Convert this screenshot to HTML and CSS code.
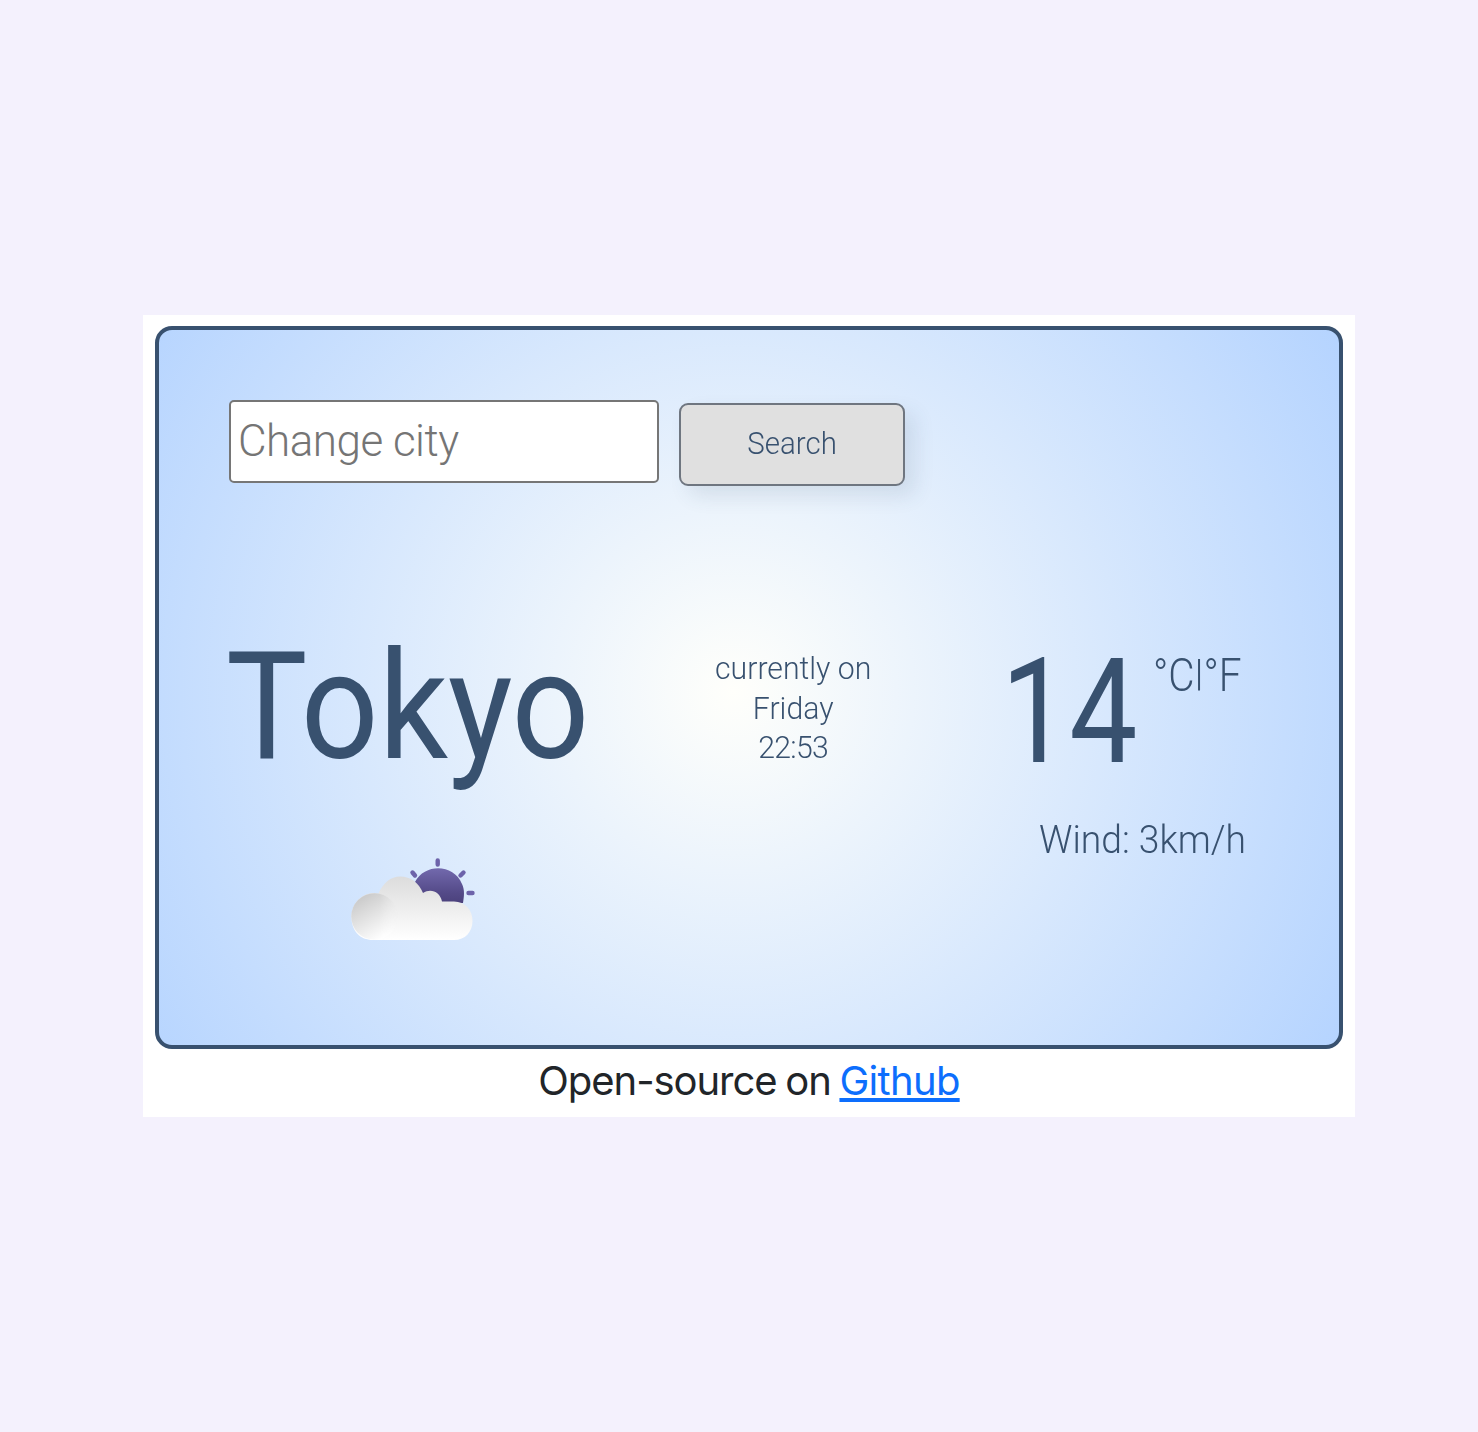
FILE: index.html
```html
<!DOCTYPE html>
<html lang="en">
<head>
<meta charset="utf-8">
<title>Weather</title>
<link rel="stylesheet" href="styles.css">
</head>
<body>
<main class="shell">
  <section class="card">
    <form class="search">
      <input class="city-input" type="text" placeholder="Change city">
      <button class="search-button" type="button"><span class="search-label">Search</span></button>
    </form>
    <div class="weather">
      <div class="place">
        <h1 class="city"><span class="city-name">Tokyo</span></h1>
        <svg class="icon" viewBox="0 0 130 90" width="130" height="90">
          <defs>
            <linearGradient id="sun" x1="0" y1="0" x2="0" y2="1"><stop offset="0" stop-color="#7269ad"/><stop offset=".7" stop-color="#544a88"/><stop offset="1" stop-color="#4b417c"/></linearGradient>
            <linearGradient id="cloud" x1="0" y1="0" x2="0" y2="1"><stop offset="0" stop-color="#dcdcdc"/><stop offset="1" stop-color="#fff"/></linearGradient>
            <linearGradient id="puff" x1=".2" y1=".1" x2=".7" y2=".95"><stop offset="0" stop-color="#cbcbcb"/><stop offset="1" stop-color="#fff"/></linearGradient>
            <linearGradient id="fade" x1="0" y1="0" x2="1" y2="0"><stop offset=".6" stop-color="#fff"/><stop offset="1" stop-color="#fff" stop-opacity="0"/></linearGradient>
            <mask id="puff-mask"><rect x="5" y="35" width="48" height="50" fill="url(#fade)"/></mask>
          </defs>
          <g stroke="#6d63aa" stroke-width="4.4" stroke-linecap="round">
            <path d="M91.700 5.500v4M66.500 17.500l2.500 3M117.500 17.500l-3 3M122.500 38h4"/>
          </g>
          <path d="M69 27C79 8 108 9 116 29C119 35 118 42 117 48H78Z" fill="url(#sun)"/>
          <path d="M27 85C14 85 5.500 76 5.500 62C5.500 48 16 38 28 38L32.500 38.500C37 28 45 21.500 54 21.500C65 21.500 73 28 77 38C85 33 94 37 96 46.500H108C119 46.500 126.500 55 126.500 66C126.500 77 119 85 108 85Z" fill="url(#cloud)"/>
          <circle cx="28.500" cy="61.500" r="23.200" fill="url(#puff)" mask="url(#puff-mask)"/>
        </svg>
      </div>
      <p class="when"><span class="when-text">currently on<br>Friday<br><span class="time">22:53</span></span></p>
      <div class="reading">
        <div class="temp"><span class="degrees">14</span><span class="units">°C<span class="bar">|</span>°F</span></div>
        <p class="wind"><span class="wind-text">Wind: 3km/h</span></p>
      </div>
    </div>
  </section>
  <footer class="credit">Open-source on <a class="credit-link" href="#">Github</a></footer>
</main>
</body>
</html>
```
FILE: styles.css
```css
* { box-sizing: border-box; }
body {
  margin: 0;
  min-height: 1432px;
  padding: 315px 123px 315px 143px;
  background: #f4f1fd;
  color: #38516f;
  font-family: Roboto, "Liberation Sans", sans-serif;
}
.shell { height: 802px; padding: 11px 12px 0; background: #fff; }
.card {
  height: 723px;
  padding: 70px;
  border: 4px solid #38516f;
  border-radius: 17px;
  background: radial-gradient(circle at 48.7% 50.5%, #fffffb, #b2d2ff 104%);
}
.search { display: flex; gap: 20px; height: 86px; }
.city-input {
  width: 430px;
  height: 83px;
  padding: 0 7px 1px;
  border: 2px solid #767676;
  border-radius: 5px;
  background: #fff;
  font: 350 44px Roboto, sans-serif;
  letter-spacing: -.5px;
}
.city-input::placeholder { color: #757575; opacity: 1; }
.search-button {
  width: 226px;
  height: 83px;
  margin-top: 3px;
  padding-bottom: 3px;
  border: 2px solid #6f7680;
  border-radius: 9px;
  background: #e0e0e0;
  box-shadow: 10px 10px 20px rgba(56, 81, 111, .12);
  color: #38516f;
  font: 350 31px Roboto, sans-serif;
}
.search-label, .city-name, .when-text, .degrees, .units, .wind-text { display: inline-block; white-space: nowrap; }
.search-label { transform: scaleX(.95); }
.weather { display: flex; padding-top: 150px; }
.place { width: 426px; }
.city { height: 219px; margin: 0 0 0 -3px; font-size: 150px; font-weight: 400; line-height: 142px; }
.city-name { transform: scaleX(.91); transform-origin: left; }
.icon { display: block; margin-left: 117px; }
.when { width: 276px; margin: 13px 0 0; font-size: 31px; font-weight: 350; line-height: 39.5px; text-align: center; }
.when-text { transform: scaleX(.975); }
.time { letter-spacing: -.7px; }
.temp { display: flex; align-items: flex-start; height: 179px; }
.reading { margin-left: 70px; }
.degrees { width: 152px; font-size: 147px; line-height: 152px; transform: scaleX(.825); transform-origin: left; }
.units { font-size: 46px; font-weight: 350; line-height: 54px; padding-top: 12px; transform: scaleX(.88); transform-origin: left; }
.bar { display: inline-block; width: 10px; transform: translateY(-3px) scaleY(.8); }
.wind { margin: 0 0 0 38px; font-size: 39px; font-weight: 350; line-height: 50px; }
.wind-text { transform: scaleX(.955); transform-origin: left; }
.credit { padding-top: 6px; color: #212529; font: 430 40px/52px Inter, sans-serif; letter-spacing: -1.05px; word-spacing: -1.5px; text-align: center; }
.credit-link { color: #0d6efd; letter-spacing: -.7px; text-decoration: underline; text-decoration-thickness: 4px; text-underline-offset: 3px; text-decoration-skip-ink: none; }
```
